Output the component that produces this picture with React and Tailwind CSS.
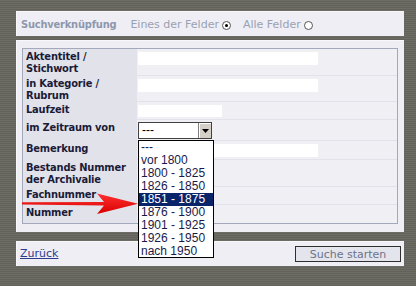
import React from "react";

const rows = [
  { label: ["Aktentitel /", "Stichwort"], h: "h-[27px]", field: "wide" },
  { label: ["in Kategorie /", "Rubrum"], h: "h-[26px]", field: "wide" },
  { label: ["Laufzeit"], h: "h-[18px]", field: "short" },
  { label: ["im Zeitraum von"], h: "h-[21px]", field: "select" },
  { label: ["Bemerkung"], h: "h-[19px]", field: "wide" },
  { label: ["Bestands Nummer", "der Archivalie"], h: "h-[27px]", field: "none" },
  { label: ["Fachnummer"], h: "h-[18px]", field: "none" },
  { label: ["Nummer"], h: "h-[18px]", field: "none", last: true },
];

const options = ["---", "vor 1800", "1800 - 1825", "1826 - 1850", "1851 - 1875", "1876 - 1900", "1901 - 1925", "1926 - 1950", "nach 1950"];

function Radio({ checked }) {
  return (
    <span className="inline-flex w-[9px] h-[9px] rounded-full border border-[#555] bg-white items-center justify-center ml-[3px]">
      {checked && <span className="w-[3px] h-[3px] rounded-full bg-black" />}
    </span>
  );
}

function Field({ type }) {
  if (type === "wide") return <div className="mt-[3px] ml-[1px] w-[180px] h-[13px] bg-white" />;
  if (type === "short") return <div className="mt-[3px] ml-[1px] w-[84px] h-[12px] bg-white" />;
  if (type === "select")
    return (
      <div className="mt-[2px] ml-[1px] w-[74px] h-[17px] bg-white border border-[#404040] flex items-stretch">
        <div className="flex-1 pl-[3px] text-[12px] leading-[15px] text-black font-['Liberation_Sans',sans-serif]">---</div>
        <div className="w-[13px] bg-[#d4d0c8] border-l border-[#808080] shadow-[inset_1px_1px_0_#fff] flex items-center justify-center">
          <svg width="7" height="4" viewBox="0 0 7 4"><path d="M0 0h7L3.5 4z" fill="#000" /></svg>
        </div>
      </div>
    );
  return null;
}

export default function App() {
  return (
    <div className="relative w-[416px] h-[286px] overflow-hidden bg-[repeating-linear-gradient(180deg,#6d6d65_0px,#6d6d65_1px,#62625a_1px,#62625a_2px)] pt-[11px] pl-[16px] pr-[12px] font-['DejaVu_Sans',sans-serif]">
      {/* top panel */}
      <div className="h-[25px] bg-[#eeeef4] border-t border-l border-[#f8f8fb] flex items-center pt-[2px] pl-[4px] text-[11px] whitespace-nowrap">
        <span className="font-bold text-[#8e97ad] font-['DejaVu_Sans_Condensed','DejaVu_Sans',sans-serif] tracking-[-0.2px]">Suchverknüpfung</span>
        <span className="ml-[14px] text-[#9aa1b3]">Eines der Felder</span>
        <Radio checked />
        <span className="ml-[12px] text-[#9aa1b3]">Alle Felder</span>
        <Radio />
      </div>

      {/* main panel */}
      <div className="mt-[4px] h-[192px] bg-[#eeeef4] border-t border-l border-[#f8f8fb] pt-[7px] pl-[5px] pr-[6px]">
        <div className="border border-[#a3a8ba] shadow-[inset_1px_1px_0_#c8ccd8]">
          {rows.map((r, i) => (
            <div key={i} className={`flex ${r.h} ${r.last ? "" : "border-b border-[#e2e2ea]"}`}>
              <div className="w-[114px] bg-[#e2e2ea] pl-[3px] pt-[2px] text-[11px] leading-[12px] font-bold text-[#1b1b38] whitespace-nowrap font-['DejaVu_Sans_Condensed','DejaVu_Sans',sans-serif] tracking-[-0.2px]">
                {r.label.map((l, j) => (
                  <div key={j}>{l}</div>
                ))}
              </div>
              <div className="flex-1 bg-[#efeff4]">
                <Field type={r.field} />
              </div>
            </div>
          ))}
        </div>
      </div>

      {/* bottom panel */}
      <div className="mt-[9px] h-[25px] bg-[#eeeef4] border-t border-l border-[#f8f8fb] flex items-center justify-between pl-[3px] pr-[3px]">
        <a href="#" className="text-[11px] text-[#2b3b8e] underline">Zurück</a>
        <button className="w-[106px] h-[16px] border border-[#2e2e2e] bg-[#e4e4ec] text-[11px] leading-[13px] text-[#6b7389]">Suche starten</button>
      </div>

      {/* dropdown list */}
      <div className="absolute left-[138px] top-[140px] w-[76px] h-[118px] bg-white border border-black font-['Liberation_Sans',sans-serif] text-[12px]">
        {options.map((o, i) => (
          <div
            key={o}
            className={`h-[13px] leading-[13px] pl-[2px] ${i === 4 ? "bg-[#0a246a] text-white" : "text-[#1a1a4a]"}`}
          >
            {o}
          </div>
        ))}
      </div>

      {/* red arrow */}
      <svg className="absolute left-0 top-0" width="416" height="286" viewBox="0 0 416 286">
        <defs>
          <linearGradient id="ar" x1="0" y1="0" x2="0" y2="1">
            <stop offset="0" stopColor="#ff3030" />
            <stop offset="1" stopColor="#d80000" />
          </linearGradient>
        </defs>
        <path d="M22 202.3 L104 202 L97 193.5 L138 203.8 L97 214 L104 205.4 L22 204.6 Z" fill="url(#ar)" />
      </svg>
    </div>
  );
}
